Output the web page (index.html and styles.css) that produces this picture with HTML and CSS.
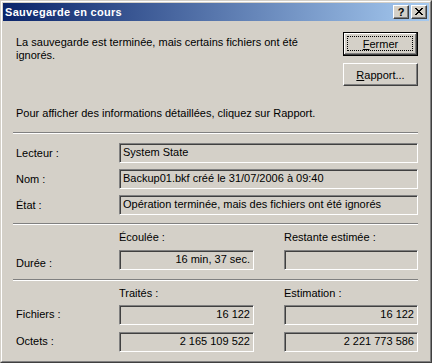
FILE: index.html
```html
<!DOCTYPE html>
<html lang="fr">
<head>
  <meta charset="UTF-8" />
  <title>Sauvegarde en cours</title>
  <link rel="stylesheet" href="styles.css">
</head>
<body>
  <div class="window">
    <div class="frame">
      <div class="titlebar">
        <span class="title">Sauvegarde en cours</span>
        <div class="caption-btns">
          <span class="cap-btn help">?</span>
          <span class="cap-btn close">
            <svg width="8" height="7" viewBox="0 0 8 7" shape-rendering="crispEdges">
              <path d="M0 0h2v1h-2zM6 0h2v1h-2zM1 1h2v1h-2zM5 1h2v1h-2zM2 2h4v1h-4zM3 3h2v1h-2zM2 4h4v1h-4zM1 5h2v1h-2zM5 5h2v1h-2zM0 6h2v1h-2zM6 6h2v1h-2z" fill="#000"/>
            </svg>
          </span>
        </div>
      </div>

      <div class="content">
        <div class="top">
          <div class="messages">
            <p class="msg">La sauvegarde est terminée, mais certains fichiers ont été ignorés.</p>
            <p class="hint">Pour afficher des informations détaillées, cliquez sur Rapport.</p>
          </div>
          <div class="actions">
            <button class="btn default"><u>F</u>ermer</button>
            <button class="btn"><u>R</u>apport...</button>
          </div>
        </div>

        <div class="sep"></div>

        <div class="info">
          <span class="label">Lecteur :</span>
          <div class="field">System State</div>
          <span class="label">Nom :</span>
          <div class="field">Backup01.bkf créé le 31/07/2006 à 09:40</div>
          <span class="label">État :</span>
          <div class="field">Opération terminée, mais des fichiers ont été ignorés</div>
        </div>

        <div class="sep"></div>

        <div class="stats duree">
          <span></span>
          <span class="head">Écoulée :</span>
          <span></span>
          <span class="head">Restante estimée :</span>
          <span class="label">Durée :</span>
          <div class="field num">16 min, 37 sec.</div>
          <span></span>
          <div class="field num"></div>
        </div>

        <div class="sep"></div>

        <div class="stats">
          <span></span>
          <span class="head">Traités :</span>
          <span></span>
          <span class="head">Estimation :</span>
          <span class="label">Fichiers :</span>
          <div class="field num">16 122</div>
          <span></span>
          <div class="field num">16 122</div>
          <span class="label">Octets :</span>
          <div class="field num">2 165 109 522</div>
          <span></span>
          <div class="field num">2 221 773 586</div>
        </div>
      </div>
    </div>
  </div>
</body>
</html>
```

FILE: styles.css
```css
* {
  box-sizing: border-box;
}

body {
  margin: 0;
  background-color: #d4d0c8;
  font-family: 'Liberation Sans', Arial, sans-serif;
  font-size: 11px;
  color: #000;
}

.window {
  width: 432px;
  height: 363px;
  border: 1px solid;
  border-color: #d4d0c8 #404040 #404040 #d4d0c8;
  background-color: #d4d0c8;
}

.frame {
  height: 100%;
  border: 1px solid;
  border-color: #fff #808080 #808080 #fff;
  padding: 1px;
}

.titlebar {
  height: 18px;
  display: flex;
  align-items: center;
  justify-content: space-between;
  padding: 0 2px 0 2px;
  background: linear-gradient(to right, #0a246a, #a6caf0);
}

.title {
  color: #fff;
  font-weight: bold;
  font-size: 11px;
  letter-spacing: 0.3px;
}

.caption-btns {
  display: flex;
  gap: 2px;
}

.cap-btn {
  width: 16px;
  height: 14px;
  display: flex;
  align-items: center;
  justify-content: center;
  background-color: #d4d0c8;
  border: 1px solid;
  border-color: #fff #404040 #404040 #fff;
  box-shadow: inset -1px -1px #808080;
  font-weight: bold;
  font-size: 11px;
  line-height: 1;
}

.close svg {
  display: block;
  margin-top: -1px;
}

.content {
  padding: 0 11px 0 10px;
}

.top {
  display: grid;
  grid-template-columns: 1fr 75px;
  gap: 20px;
  height: 111px;
}

.messages {
  padding-left: 3px;
  display: flex;
  flex-direction: column;
  justify-content: space-between;
}

.msg {
  margin: 15px 0 0;
  line-height: 13px;
  width: 290px;
}

.hint {
  margin: 0 0 12px;
  line-height: 13px;
}

.actions {
  padding-top: 11px;
  display: flex;
  flex-direction: column;
  gap: 7px;
}

.btn {
  position: relative;
  width: 75px;
  height: 23px;
  padding: 0;
  font-family: inherit;
  font-size: 11px;
  color: #000;
  background-color: #d4d0c8;
  border: 1px solid;
  border-color: #fff #404040 #404040 #fff;
  box-shadow: inset -1px -1px #808080, inset 1px 1px #d4d0c8;
}

.btn.default {
  height: 24px;
  border-color: #000;
  box-shadow: inset -1px -1px #404040, inset 1px 1px #fff, inset -2px -2px #808080;
}

.btn.default::after {
  content: "";
  position: absolute;
  inset: 3px 4px 4px 3px;
  border: 1px dotted #000;
}

.sep {
  height: 2px;
  border-top: 1px solid #808080;
  border-bottom: 1px solid #fff;
}

.info {
  display: grid;
  grid-template-columns: 106px 1fr;
  row-gap: 6px;
  align-items: center;
  padding: 9px 0 8px;
}

.label {
  padding-left: 3px;
}

.field {
  height: 20px;
  line-height: 16px;
  padding: 0 2px;
  border: 1px solid;
  border-color: #808080 #fff #fff #808080;
  box-shadow: inset 1px 1px #404040, inset -1px -1px #d4d0c8;
  padding-left: 3px;
  white-space: nowrap;
}

.field.num {
  text-align: right;
  padding-right: 3px;
}

.stats {
  display: grid;
  grid-template-columns: 106px 135px 30px 134px;
  grid-auto-rows: auto;
  align-items: center;
  padding: 6px 0 12px;
}

.stats.duree {
  padding-bottom: 8px;
}

.stats .head {
  height: 18px;
  line-height: 13px;
}

.stats.duree .label {
  padding-top: 8px;
}

.stats .label {
  margin-bottom: 2px;
}

.stats .field:nth-child(n+10) {
  margin-top: 7px;
}

.stats .label:nth-child(9) {
  margin-top: 7px;
}
```
